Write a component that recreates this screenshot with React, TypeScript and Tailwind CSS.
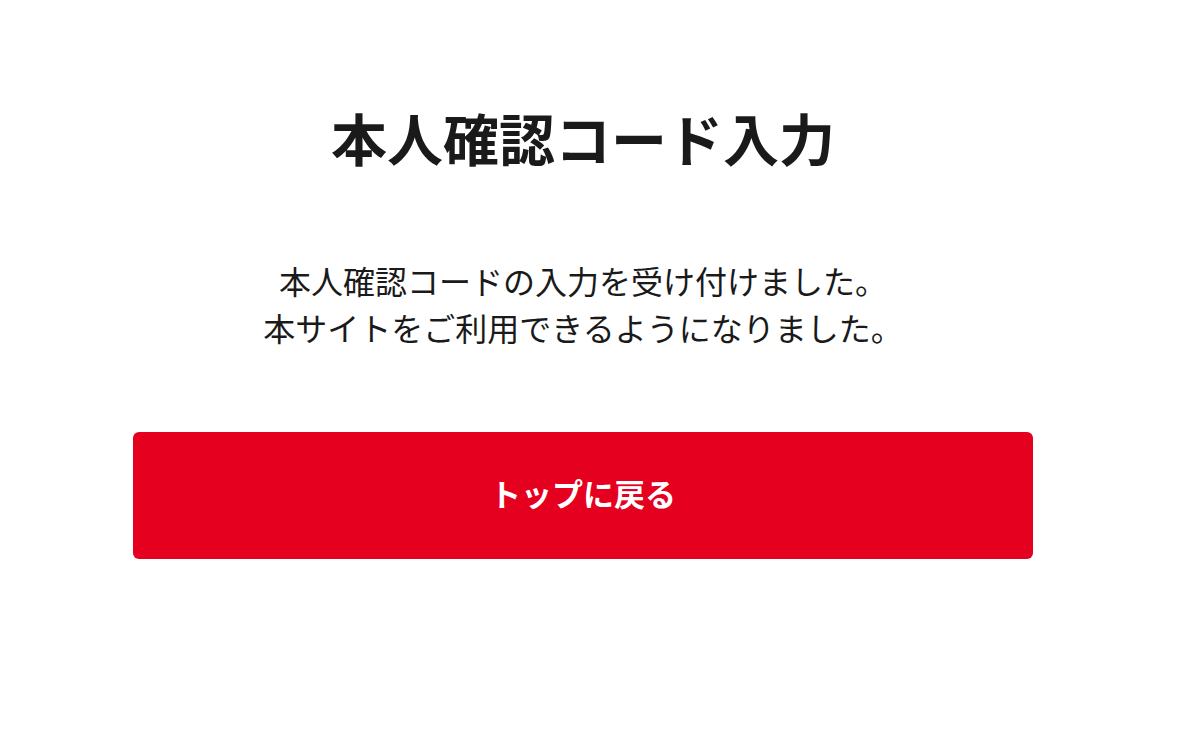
export default function App() {
  return (
    <div className="min-h-screen bg-white font-['Noto_Sans_CJK_JP','Noto_Sans',sans-serif] text-[#1a1a1a]">
      <div className="ml-[133px] flex w-[900px] flex-col items-center pt-[99px]">
        <h1 className="text-[56px] font-bold leading-[75px]">本人確認コード入力</h1>

        <div className="mt-[83px] text-center text-[32px] leading-[47px]">
          <p>本人確認コードの入力を受け付けました。</p>
          <p>本サイトをご利用できるようになりました。</p>
        </div>

        <button
          type="button"
          className="mt-[81px] flex h-[127px] w-full items-center justify-center rounded-[6px] bg-[#e50020] pb-[5px] text-[31px] font-bold text-white"
        >
          トップに戻る
        </button>
      </div>
    </div>
  );
}
